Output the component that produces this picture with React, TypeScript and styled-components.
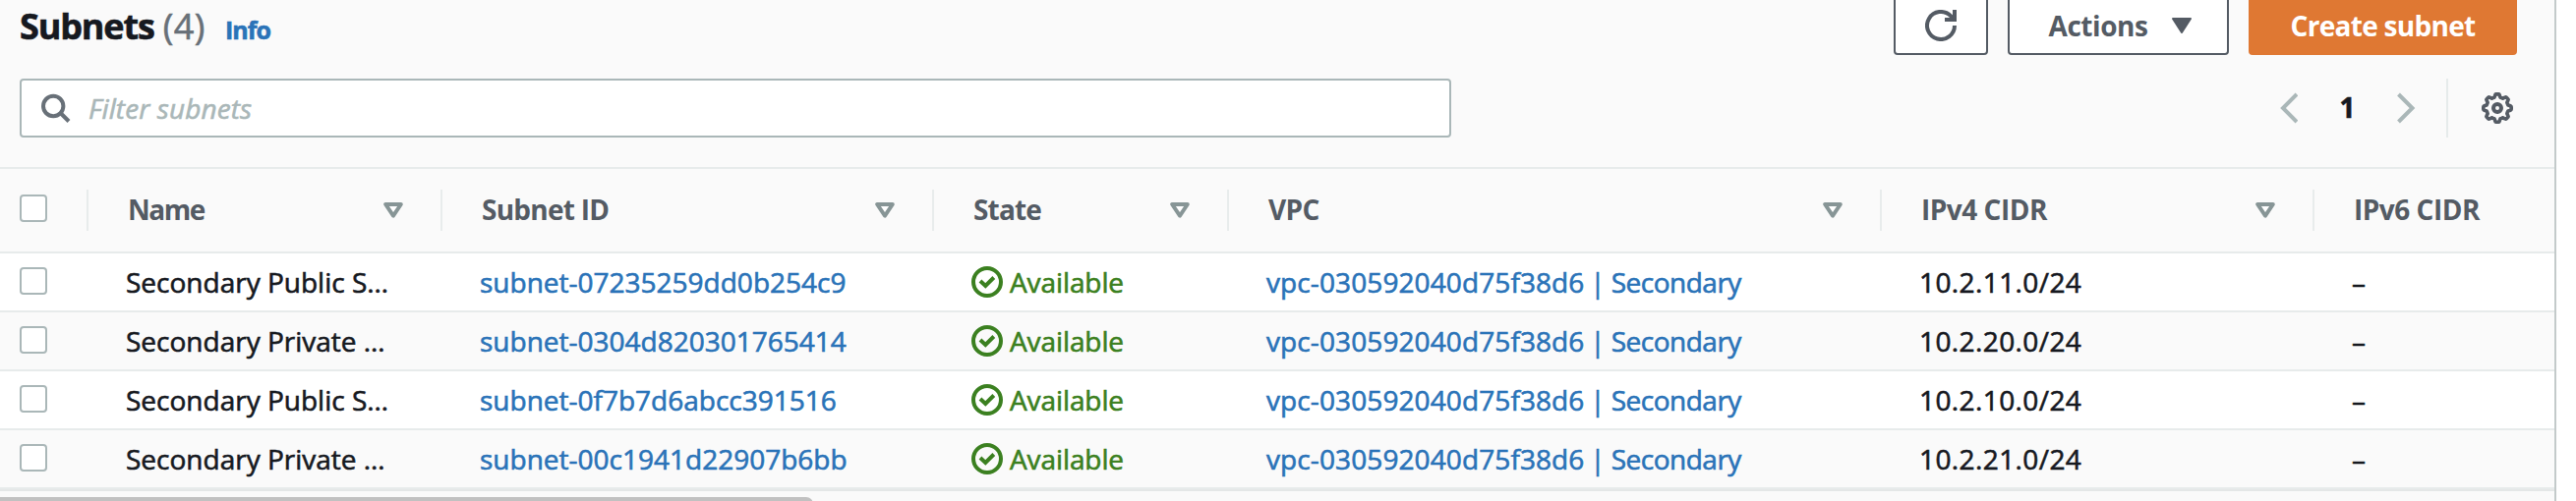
import React from "react";
import styled, { createGlobalStyle } from "styled-components";

const GlobalStyle = createGlobalStyle`
  *, *::before, *::after { box-sizing: border-box; }
  body { margin: 0; background: #fff; }
  #root { height: 510px; overflow: hidden; }
`;

const Panel = styled.main`
  width: 2600px;
  height: 510px;
  overflow: hidden;
  background: #fafafa;
  border-right: 2px solid #c3caca;
  font-family: "Open Sans", sans-serif;
  font-size: 28px;
  font-weight: 400;
  line-height: 36px;
  color: #16191f;
  white-space: nowrap;
  -webkit-text-stroke: 0.6px currentColor;
`;

const TopBar = styled.header`
  display: flex;
  justify-content: space-between;
  height: 80px;
  padding: 0 38px 0 20px;
`;

const Heading = styled.div`
  display: flex;
  align-items: baseline;
  height: 56px;
  padding-top: 4px;
`;

const Title = styled.h1`
  margin: 0;
  font-size: 36px;
  line-height: 46px;
  font-weight: 700;
  letter-spacing: -1.15px;
`;

const Counter = styled.span`
  margin-left: 9px;
  font-weight: 400;
  letter-spacing: 0.5px;
  color: #687078;
`;

const InfoLink = styled.a`
  margin-left: 20px;
  font-size: 25px;
  font-weight: 700;
  letter-spacing: -1px;
  color: #2a73b8;
`;

const Actions = styled.div`
  display: flex;
  gap: 20px;
  height: 60px;
  margin-top: -4px;
`;

const Button = styled.button<{ $primary?: boolean; $width: number; $menu?: boolean }>`
  display: flex;
  align-items: center;
  justify-content: center;
  gap: 25px;
  width: ${(p) => p.$width}px;
  height: 60px;
  padding: 0 0 0 ${(p) => (p.$menu ? 4 : 0)}px;
  border: 2px solid ${(p) => (p.$primary ? "#df7833" : "#545b64")};
  border-radius: 4px;
  background: ${(p) => (p.$primary ? "#df7833" : "#fff")};
  color: ${(p) => (p.$primary ? "#fff" : "#545b64")};
  font: inherit;
  font-weight: 700;
  letter-spacing: ${(p) => (p.$primary ? -0.7 : -0.45)}px;
  white-space: nowrap;
  -webkit-text-stroke: 0;
`;

const FilterBar = styled.div`
  display: flex;
  justify-content: space-between;
  height: 90px;
  padding: 0 42px 0 20px;
`;

const SearchBox = styled.label`
  display: flex;
  align-items: center;
  gap: 18px;
  width: 1456px;
  height: 60px;
  padding-left: 20px;
  border: 2px solid #aab7b8;
  border-radius: 4px;
  background: #fff;
  color: #aab7b8;
  font-style: italic;
  letter-spacing: 0.1px;
`;

const Pager = styled.nav`
  display: flex;
  align-items: center;
  height: 60px;
  color: #aab7b8;
`;

const PageNumber = styled.span`
  width: 101px;
  padding-bottom: 2px;
  text-align: center;
  font-weight: 700;
  color: #16191f;
`;

const Preferences = styled.div`
  display: flex;
  align-items: center;
  height: 60px;
  margin-left: 31px;
  padding-left: 34px;
  border-left: 2px solid #e6ebeb;
  color: #545b64;
`;

const columns = "90px 360px 500px 300px 664px 440px 1fr";

const HeadRow = styled.div`
  display: grid;
  grid-template-columns: ${columns};
  align-items: center;
  height: 88px;
  border-top: 2px solid #e7ebeb;
  border-bottom: 2px solid #e7ebeb;
`;

const HeadCell = styled.div<{ $last?: boolean; $tracking?: number }>`
  display: flex;
  align-items: center;
  justify-content: space-between;
  height: 42px;
  padding: 0 38px 0 40px;
  border-right: ${(p) => (p.$last ? "none" : "2px solid #e8ecec")};
  font-weight: 700;
  letter-spacing: ${(p) => p.$tracking ?? 0}px;
  color: #545b64;
  -webkit-text-stroke: 0;
`;

const HeadLabel = styled.span`
  padding-bottom: 2px;
`;

const SelectAll = styled(HeadCell)`
  padding: 0 0 4px 20px;
`;

const Row = styled.div<{ $striped: boolean }>`
  display: grid;
  grid-template-columns: ${columns};
  align-items: center;
  height: 60px;
  border-bottom: 2px solid #e7ebeb;
  background: ${(p) => (p.$striped ? "#fafafa" : "#fff")};
`;

const Cell = styled.div<{ $tracking?: number }>`
  padding-left: 38px;
  letter-spacing: ${(p) => p.$tracking ?? 0}px;
`;

const CheckCell = styled.div`
  display: flex;
  padding: 0 0 2px 20px;
`;

const Checkbox = styled.span`
  width: 28px;
  height: 28px;
  border: 2px solid #aab7b8;
  border-radius: 4px;
  background: #fff;
`;

const Link = styled.a`
  color: #2a73b8;
`;

const VpcLink = styled(Link)`
  letter-spacing: 0.1px;
  word-spacing: -1.5px;
`;

const VpcName = styled.span`
  letter-spacing: -0.5px;
`;

const Status = styled.div`
  display: flex;
  align-items: center;
  gap: 7px;
  padding-left: 38px;
  letter-spacing: -0.1px;
  color: #3b8020;
`;

const TableEnd = styled.div`
  height: 2px;
  background: #e4e7e7;
`;

const ScrollTrack = styled.div`
  padding-top: 6px;
`;

const ScrollThumb = styled.div`
  width: 827px;
  height: 14px;
  border-radius: 0 7px 7px 0;
  background: #c1c1c1;
`;

const RefreshIcon = () => (
  <svg width="32" height="32" viewBox="0 0 32 32" fill="none" stroke="currentColor" strokeWidth="4">
    <path d="M30 16A14 14 0 1 1 26 6.2L29.5 10" />
    <path d="M20 10H30V0" />
  </svg>
);

const CaretIcon = () => (
  <svg width="20" height="16" viewBox="0 0 20 16" fill="currentColor" stroke="currentColor" strokeWidth="2" strokeLinejoin="round">
    <path d="M1 1H19L10 15Z" />
  </svg>
);

const SortIcon = () => (
  <svg width="20" height="16" viewBox="0 0 20 16" fill="#fff" stroke="#879596" strokeWidth="4" strokeLinejoin="round">
    <path d="M2.2 2H17.8L10 13.6Z" />
  </svg>
);

const SearchIcon = () => (
  <svg width="30" height="30" viewBox="0 0 30 30" fill="none" stroke="#687078" strokeWidth="4">
    <circle cx="12.2" cy="13" r="10.2" />
    <path d="M19 19.5L28 28.5" />
  </svg>
);

const ChevronIcon = ({ right }: { right?: boolean }) => (
  <svg width="19" height="32" viewBox="0 0 19 32" fill="none" stroke="currentColor" strokeWidth="4">
    <path d={right ? "M1.5 2L15.5 16L1.5 30" : "M18 2L4 16L18 30"} />
  </svg>
);

/* Eight-toothed outline: the radius swings between tooth tip and valley. */
const gearOutline =
  "M" +
  Array.from({ length: 96 }, (_, i) => {
    const angle = (i / 96) * Math.PI * 2;
    const swing = Math.max(-1, Math.min(1, Math.cos(angle * 8) * 1.8));
    const radius = 12.7 + 1.5 * swing;
    return `${(16 + radius * Math.sin(angle)).toFixed(2)} ${(16 - radius * Math.cos(angle)).toFixed(2)}`;
  }).join("L") +
  "Z";

const GearIcon = () => (
  <svg width="32" height="32" viewBox="0 0 32 32" fill="none" stroke="currentColor" strokeLinejoin="round">
    <path d={gearOutline} strokeWidth="3.6" />
    <circle cx="16" cy="16" r="4" strokeWidth="4" />
  </svg>
);

const CheckIcon = () => (
  <svg width="32" height="32" viewBox="0 0 32 32" fill="none" stroke="currentColor" strokeWidth="4">
    <circle cx="16" cy="16" r="14" />
    <path d="M9 15L14.3 20L22.8 11.5" />
  </svg>
);

const headings = [
  { label: "Name", tracking: -1.5 },
  { label: "Subnet ID", tracking: -0.75 },
  { label: "State", tracking: -0.85 },
  { label: "VPC", tracking: -0.6 },
  { label: "IPv4 CIDR", tracking: -0.5 },
];

const subnets = [
  { name: "Secondary Public S…", id: "subnet-07235259dd0b254c9", cidr: "10.2.11.0/24" },
  { name: "Secondary Private …", id: "subnet-0304d820301765414", cidr: "10.2.20.0/24" },
  { name: "Secondary Public S…", id: "subnet-0f7b7d6abcc391516", cidr: "10.2.10.0/24" },
  { name: "Secondary Private …", id: "subnet-00c1941d22907b6bb", cidr: "10.2.21.0/24" },
];

export default function App() {
  return (
    <>
      <GlobalStyle />
      <Panel>
        <TopBar>
          <Heading>
            <Title>
              Subnets<Counter>(4)</Counter>
            </Title>
            <InfoLink>Info</InfoLink>
          </Heading>
          <Actions>
            <Button $width={96} aria-label="Refresh"><RefreshIcon /></Button>
            <Button $width={225} $menu>Actions<CaretIcon /></Button>
            <Button $primary $width={273}>Create subnet</Button>
          </Actions>
        </TopBar>
        <FilterBar>
          <SearchBox><SearchIcon />Filter subnets</SearchBox>
          <Pager>
            <ChevronIcon />
            <PageNumber>1</PageNumber>
            <ChevronIcon right />
            <Preferences><GearIcon /></Preferences>
          </Pager>
        </FilterBar>
        <HeadRow>
          <SelectAll><Checkbox /></SelectAll>
          {headings.map((h) => (
            <HeadCell key={h.label} $tracking={h.tracking}>
              <HeadLabel>{h.label}</HeadLabel>
              <SortIcon />
            </HeadCell>
          ))}
          <HeadCell $last $tracking={-0.5}><HeadLabel>IPv6 CIDR</HeadLabel></HeadCell>
        </HeadRow>
        {subnets.map((s, i) => (
          <Row key={s.id} $striped={i % 2 === 1}>
            <CheckCell><Checkbox /></CheckCell>
            <Cell>{s.name}</Cell>
            <Cell><Link>{s.id}</Link></Cell>
            <Status><CheckIcon />Available</Status>
            <Cell>
              <VpcLink>vpc-030592040d75f38d6 | <VpcName>Secondary</VpcName></VpcLink>
            </Cell>
            <Cell $tracking={0.4}>{s.cidr}</Cell>
            <Cell>–</Cell>
          </Row>
        ))}
        <TableEnd />
        <ScrollTrack><ScrollThumb /></ScrollTrack>
      </Panel>
    </>
  );
}
